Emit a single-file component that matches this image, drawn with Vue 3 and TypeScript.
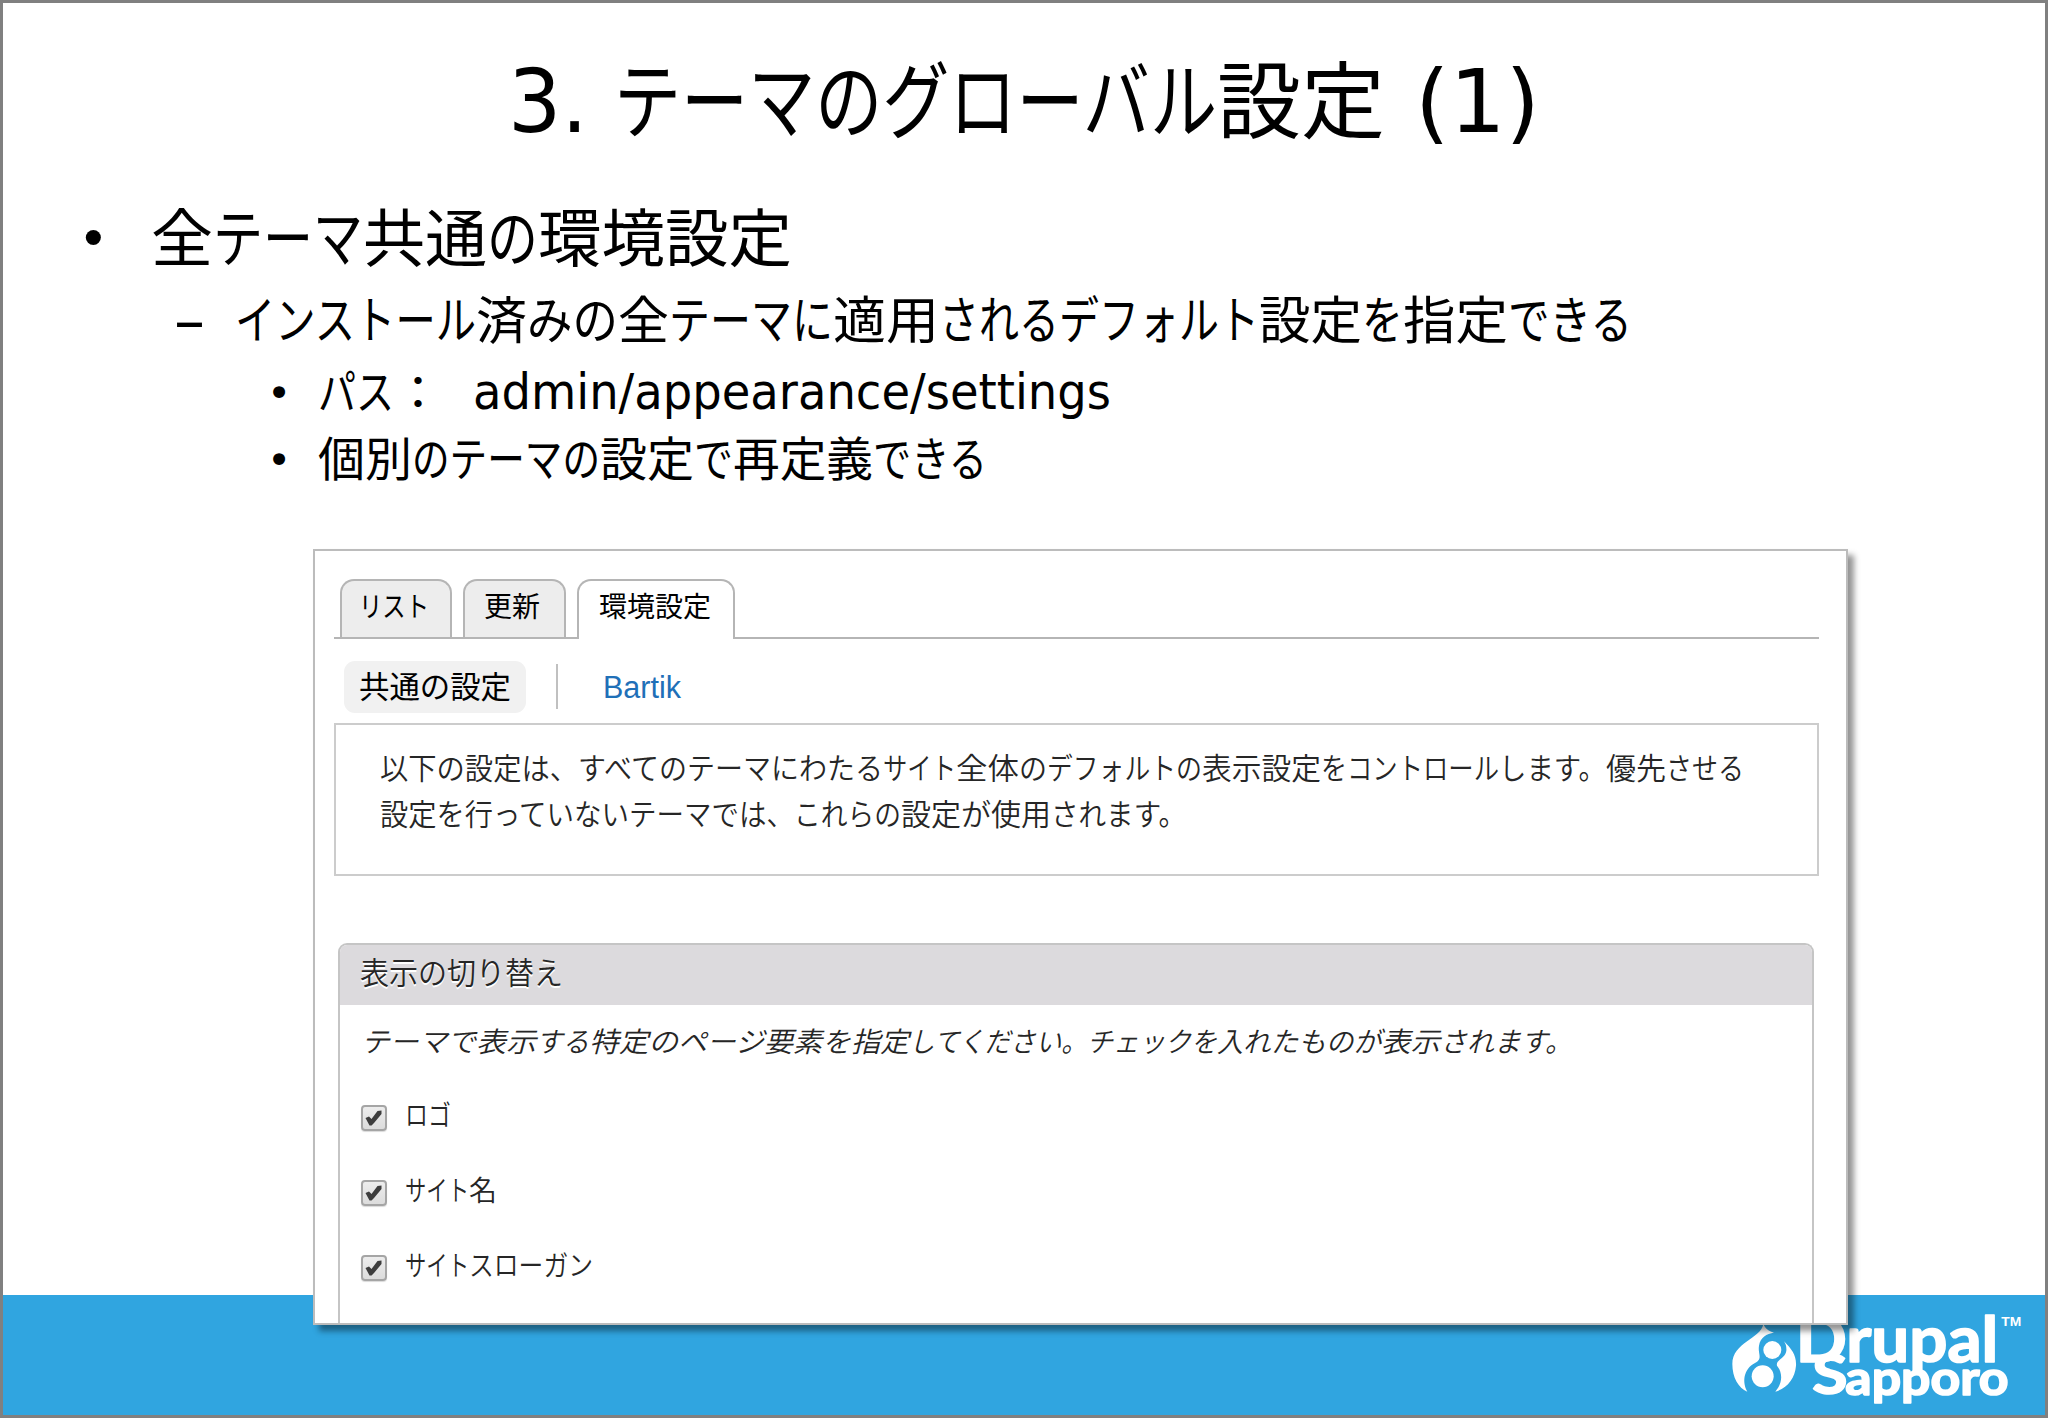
<script setup lang="ts">
import { reactive } from 'vue';

// A run is a piece of text and the width it takes up on the slide
type Run = [string, number];

const title: Run[] = [
  ['3.', 80], [' ', 26], ['テーマのグローバル', 603], ['設定', 168], [' ', 30], ['(1)', 125],
];

const bullets: { level: number; mark: string; runs: Run[] }[] = [
  { level: 1, mark: '•', runs: [['全', 62], ['テーマ', 150], ['共通', 124], ['の', 51], ['環境設定', 254]] },
  {
    level: 2,
    mark: '–',
    runs: [
      ['インストール', 241], ['済', 51], ['みの', 91], ['全', 51], ['テーマに', 164], ['適用', 106],
      ['されるデフォルト', 320], ['設定', 103], ['を', 41], ['指定', 105], ['できる', 124],
    ],
  },
  { level: 3, mark: '•', runs: [['パス', 76], ['：', 48], [' ', 31], ['admin/appearance/settings', 638]] },
  { level: 3, mark: '•', runs: [['個別', 94], ['のテーマの', 188], ['設定', 94], ['で', 39], ['再定義', 140], ['できる', 114]] },
];

const tabs: { name: string; active: boolean; runs: Run[] }[] = [
  { name: 'list', active: false, runs: [['リスト', 70]] },
  { name: 'update', active: false, runs: [['更新', 56]] },
  { name: 'settings', active: true, runs: [['環境設定', 112]] },
];

const help: Run[][] = [
  [
    ['以下の設定は、', 198], ['すべてのテーマにわたる', 305], ['サイト', 73], ['全体', 63], ['の', 28],
    ['デフォルト', 129], ['の', 26], ['表示設定', 119], ['を', 26], ['コントロール', 152], ['します。', 107],
    ['優先', 60], ['させる', 78],
  ],
  [['設定を行', 113], ['っていないテーマでは、', 301], ['これらの', 107], ['設定が使用', 150], ['されます。', 135]],
];

const description: Run[] = [
  ['テーマで', 115], ['表示', 60], ['する', 53], ['特定の', 89], ['ページ', 86], ['要素を指定', 145],
  ['してください。', 178], ['チェックを入', 156], ['れたものが', 138], ['表示', 59], ['されます。', 132],
];

// State
const state = reactive({
  options: [
    { runs: [['ロゴ', 46]] as Run[], checked: true },
    { runs: [['サイト', 64], ['名', 28]] as Run[], checked: true },
    { runs: [['サイト', 64], ['スローガン', 124]] as Run[], checked: true },
  ],
});

const isLatin = (text: string) => /[!-~]/.test(text);

// Squeeze or stretch a run to its width
const vFit = {
  mounted(el: HTMLElement, binding: { value: number }) {
    const natural = el.getBoundingClientRect().width;
    el.style.transform = `scaleX(${binding.value / natural})`;
    el.style.marginRight = `${binding.value - natural}px`;
  },
};
</script>

<template>
  <div class="slide">
    <h1 class="title">
      <span v-for="([text, width], i) in title" :key="i" v-fit="width" class="run" :class="{ latin: isLatin(text) }">{{ text }}</span>
    </h1>

    <div v-for="(bullet, i) in bullets" :key="i" class="bullet" :class="'level-' + bullet.level + (i === 3 ? ' last' : '')">
      <span class="mark">{{ bullet.mark }}</span>
      <span class="line">
        <span v-for="([text, width], j) in bullet.runs" :key="j" v-fit="width" class="run" :class="{ latin: isLatin(text) }">{{ text }}</span>
      </span>
    </div>

    <!-- Settings page -->
    <section class="panel">
      <nav class="tabs">
        <a v-for="tab in tabs" :key="tab.name" class="tab" :class="[tab.name, { active: tab.active }]">
          <span v-for="([text, width], i) in tab.runs" :key="i" v-fit="width" class="run">{{ text }}</span>
        </a>
      </nav>
      <nav class="subtabs">
        <a class="pill"><span v-fit="152" class="run">共通の設定</span></a>
        <a class="theme"><span v-fit="78" class="run">Bartik</span></a>
      </nav>
      <div class="help">
        <p v-for="(row, i) in help" :key="i">
          <span v-for="([text, width], j) in row" :key="j" v-fit="width" class="run">{{ text }}</span>
        </p>
      </div>

      <div class="fieldset">
        <h2 class="legend"><span v-fit="203" class="run">表示の切り替え</span></h2>
        <p class="description">
          <span v-for="([text, width], i) in description" :key="i" v-fit="width" class="run">{{ text }}</span>
        </p>
        <label v-for="(option, i) in state.options" :key="i" class="option" @click="option.checked = !option.checked">
          <span class="checkbox">
            <svg v-if="option.checked" viewBox="0 0 22 22" width="22" height="22">
              <path d="M2.5 11 L6 9.5 L8.5 12 L14.5 4 L18.5 3.5 L18.5 7 L11 16 L8.5 18.5 L6.5 18.5 Z" fill="#3d3d3d" />
            </svg>
          </span>
          <span class="label">
            <span v-for="([text, width], j) in option.runs" :key="j" v-fit="width" class="run">{{ text }}</span>
          </span>
        </label>
      </div>
    </section>

    <footer class="footer">
      <svg class="logo" viewBox="90 130 882 282" width="294" height="94" fill="#fff">
        <path d="M190 160 C182 205 97 215 97 280 C97 320 115 352 142 363 C126 335 130 295 165 277 C190 264 173 250 177 225 C181 200 200 189 222 186 C205 181 197 175 190 160 Z" />
        <path d="M252 212 C275 235 290 255 288 285 C285 322 262 353 226 363 C250 335 247 305 231 285 C226 268 257 262 259 240 C260 228 257 220 252 212 Z" />
        <circle cx="217" cy="238" r="27" />
        <circle cx="188" cy="317" r="33" />
        <text class="word" x="287" y="274" font-size="192" textLength="608" lengthAdjust="spacingAndGlyphs">Drupal</text>
        <text class="word" x="337" y="370" font-size="166" textLength="106" lengthAdjust="spacingAndGlyphs">S</text>
        <text class="word" x="436" y="372" font-size="142" textLength="490" lengthAdjust="spacingAndGlyphs">apporo</text>
        <text class="tm" x="904" y="166" font-size="36" textLength="60" lengthAdjust="spacingAndGlyphs">TM</text>
      </svg>
    </footer>
  </div>
</template>

<style>
body {
  margin: 0;
}
</style>

<style scoped>
.slide {
  display: flex;
  flex-direction: column;
  box-sizing: border-box;
  width: 2048px;
  height: 1418px;
  border: 3px solid #808080;
  background: #fff;
  color: #000;
  font-family: "Noto Sans CJK JP", sans-serif;
  overflow: hidden;
}
.run {
  display: inline-block;
  white-space: pre;
  transform-origin: left center;
}
.latin {
  font-family: "DejaVu Sans", sans-serif;
  font-size: 1.04em;
  line-height: 1;
}
.title,
.line,
.help p,
.description,
.label {
  display: flex;
  align-items: baseline;
}
.title {
  justify-content: center;
  box-sizing: border-box;
  height: 180px;
  margin: 0;
  padding-top: 3px;
  font-size: 84px;
  font-weight: 400;
  line-height: 180px;
  white-space: nowrap;
}

/* Bullets */
.bullet {
  display: flex;
  white-space: nowrap;
}
.mark {
  box-sizing: border-box;
  height: 0;
  font-family: "DejaVu Sans", sans-serif;
}
.level-1 {
  padding-left: 75px;
  font-size: 63px;
  line-height: 102px;
}
.level-1 .mark {
  width: 73px;
  padding-top: 5px;
  font-size: 52px;
}
.level-2 {
  padding-left: 171px;
  font-size: 51px;
  line-height: 64px;
}
.level-2 .mark {
  width: 61px;
  padding-top: 4px;
  font-size: 62px;
}
.level-3 {
  padding-left: 264px;
  font-size: 47px;
  line-height: 80px;
}
.level-3 .mark {
  width: 51px;
  padding-top: 4px;
  font-size: 41px;
}
.bullet.last {
  line-height: 54px;
}

/* Settings page */
.panel {
  position: relative;
  z-index: 1;
  display: flex;
  flex-direction: column;
  box-sizing: border-box;
  width: 1535px;
  height: 776px;
  margin: 66px 0 0 310px;
  padding: 28px 27px 0 19px;
  border: 2px solid #bcbcbc;
  background: #fff;
  box-shadow: 6px 6px 6px rgba(0, 0, 0, 0.42);
}
.tabs {
  display: flex;
  height: 58px;
  padding-left: 6px;
  border-bottom: 2px solid #b5b5b5;
  font-size: 28px;
  line-height: 49px;
}
.tab {
  box-sizing: border-box;
  height: 58px;
  margin-right: 11px;
  border: 2px solid #b5b5b5;
  border-bottom: 0;
  border-radius: 14px 14px 0 0;
  background: #ededed;
}
.list {
  width: 112px;
  padding-left: 17px;
}
.update {
  width: 103px;
  padding-left: 19px;
}
.settings {
  width: 158px;
  padding-left: 20px;
}
.tab.active {
  height: 60px;
  background: #fff;
}
.subtabs {
  display: flex;
  align-items: center;
  height: 84px;
  padding: 11px 0 0 10px;
  box-sizing: border-box;
}
.pill {
  box-sizing: border-box;
  width: 182px;
  height: 52px;
  padding-left: 15px;
  border-radius: 11px;
  background: #f1f1f1;
  font-size: 31px;
  line-height: 48px;
}
.theme {
  height: 45px;
  margin-left: 30px;
  padding-left: 45px;
  border-left: 2px solid #c0c0c0;
  color: #1f70b8;
  font-family: "Liberation Sans", Arial, sans-serif;
  font-size: 31px;
  line-height: 47px;
}
.help {
  box-sizing: border-box;
  height: 153px;
  padding: 18px 0 0 44px;
  border: 2px solid #ccc;
  color: #262626;
  font-size: 30px;
  font-weight: 350;
  line-height: 46px;
}
.help p {
  margin: 0;
}
.fieldset {
  flex: 1;
  margin: 67px 5px 0 4px;
  border: 2px solid #c5c5c5;
  border-bottom: 0;
  border-radius: 9px 9px 0 0;
  color: #262626;
}
.legend {
  height: 60px;
  margin: 0;
  padding-left: 20px;
  border-radius: 7px 7px 0 0;
  background: #dcdadd;
  font-size: 31px;
  font-weight: 350;
  line-height: 51px;
  text-shadow: 0 2px 0 #fff;
}
.description {
  height: 76px;
  margin: 0;
  padding-left: 21px;
  font-size: 28px;
  font-weight: 350;
  font-style: italic;
  line-height: 71px;
}
.option {
  display: flex;
  align-items: center;
  height: 75.4px;
  padding-left: 21px;
  font-size: 28px;
  font-weight: 350;
}
.checkbox {
  box-sizing: border-box;
  width: 26px;
  height: 26px;
  margin: -2px 18px 0 0;
  border: 2px solid #a5a5a5;
  border-radius: 4px;
  background: linear-gradient(#ededed, #dcdcdc);
  box-shadow: 0 1px 1px rgba(0, 0, 0, 0.15);
}
.checkbox svg {
  display: block;
}
.label {
  height: 46px;
  line-height: 37px;
}

/* Footer */
.footer {
  display: flex;
  flex: none;
  justify-content: flex-end;
  height: 120px;
  margin-top: -30px;
  padding-right: 21px;
  background: #30a5e0;
}
.logo {
  margin-top: 19px;
}
.word {
  font-family: "Lato", sans-serif;
  font-weight: 700;
  stroke: #fff;
  stroke-width: 5px;
  stroke-linejoin: round;
}
.tm {
  font-family: "Liberation Sans", Arial, sans-serif;
  font-weight: 700;
}
</style>
